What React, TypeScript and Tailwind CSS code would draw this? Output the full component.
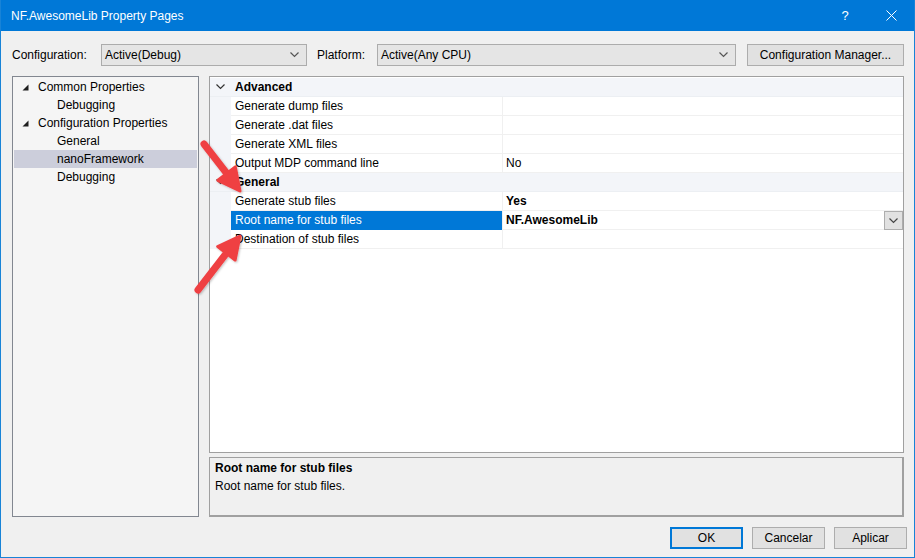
import React from 'react';

const font = { fontFamily: '"Liberation Sans", Arial, sans-serif' };

const Chevron = ({ className = '' }: { className?: string }) => (
  <svg width="9" height="6" viewBox="0 0 9 6" className={className}>
    <polyline points="0.5,0.5 4.5,4.5 8.5,0.5" fill="none" stroke="currentColor" strokeWidth="1.2" />
  </svg>
);

const TreeArrow = () => (
  <svg width="7" height="7" viewBox="0 0 7 7" className="shrink-0">
    <polygon points="6.5,0.5 6.5,6.5 0.5,6.5" fill="#1e1e1e" />
  </svg>
);

const treeItems = [
  { label: 'Common Properties', level: 0 },
  { label: 'Debugging', level: 1 },
  { label: 'Configuration Properties', level: 0 },
  { label: 'General', level: 1 },
  { label: 'nanoFramework', level: 1, selected: true },
  { label: 'Debugging', level: 1 },
];

type Row =
  | { kind: 'cat'; label: string }
  | { kind: 'prop'; label: string; value?: string; bold?: boolean; selected?: boolean; dropdown?: boolean };

const rows: Row[] = [
  { kind: 'cat', label: 'Advanced' },
  { kind: 'prop', label: 'Generate dump files' },
  { kind: 'prop', label: 'Generate .dat files' },
  { kind: 'prop', label: 'Generate XML files' },
  { kind: 'prop', label: 'Output MDP command line', value: 'No' },
  { kind: 'cat', label: 'General' },
  { kind: 'prop', label: 'Generate stub files', value: 'Yes', bold: true },
  { kind: 'prop', label: 'Root name for stub files', value: 'NF.AwesomeLib', bold: true, selected: true, dropdown: true },
  { kind: 'prop', label: 'Destination of stub files' },
];

const Combo = ({ text, width }: { text: string; width: string }) => (
  <div className={`${width} h-[22px] bg-[#e5e5e5] border border-[#acacac] flex items-center pl-[3px] pr-[7px]`}>
    <span className="flex-1">{text}</span>
    <Chevron className="text-[#555]" />
  </div>
);

const WinButton = ({ label, primary }: { label: string; primary?: boolean }) => (
  <div
    className={`w-[73px] h-[22px] bg-[#e1e1e1] flex items-center justify-center ${
      primary ? 'border-2 border-[#0078d7]' : 'border border-[#adadad]'
    }`}
  >
    {label}
  </div>
);

const Arrows = () => (
  <svg className="absolute left-0 top-0 pointer-events-none" width="915" height="558" viewBox="0 0 915 558">
    <defs>
      <filter id="sh" x="-20%" y="-20%" width="140%" height="140%">
        <feDropShadow dx="1" dy="1" stdDeviation="1" floodColor="#000" floodOpacity="0.25" />
      </filter>
    </defs>
    <g fill="#ef4043" stroke="#ef4043" strokeLinejoin="round" strokeLinecap="round" filter="url(#sh)">
      <line x1="203" y1="144" x2="227" y2="175" strokeWidth="7" />
      <polygon points="239,191 216.9,180.3 234.3,166.9" strokeWidth="3" />
      <line x1="197" y1="290" x2="224" y2="255" strokeWidth="7" />
      <polygon points="239,236 234.1,260.1 216.7,246.5" strokeWidth="3" />
    </g>
  </svg>
);

export default function App() {
  return (
    <div style={font} className="relative w-[915px] h-[558px] text-[12px] text-black bg-[#f0f0f0] border-x border-b border-[#1883d7] flex flex-col overflow-hidden">
      {/* title bar */}
      <div className="h-[31px] bg-[#0078d7] flex items-center text-white shrink-0">
        <span className="pl-[10px] flex-1">NF.AwesomeLib Property Pages</span>
        <div className="w-[46px] h-full flex items-center justify-center text-[13px]">?</div>
        <div className="w-[46px] h-full flex items-center justify-center">
          <svg width="11" height="11" viewBox="0 0 11 11">
            <path d="M0.5 0.5 L10.5 10.5 M10.5 0.5 L0.5 10.5" stroke="#fff" strokeWidth="1" />
          </svg>
        </div>
      </div>

      {/* toolbar */}
      <div className="flex items-center mt-[13px] pl-[11px] h-[22px] shrink-0">
        <span className="w-[89px]">Configuration:</span>
        <Combo text="Active(Debug)" width="w-[206px]" />
        <span className="ml-[10px] w-[60px]">Platform:</span>
        <Combo text="Active(Any CPU)" width="w-[359px]" />
        <div className="ml-[11px] w-[157px] h-[22px] bg-[#e1e1e1] border border-[#adadad] flex items-center justify-center">
          Configuration Manager...
        </div>
      </div>

      {/* main area */}
      <div className="flex mt-[10px] pl-[11px] pr-[10px] h-[441px] shrink-0 gap-[10px]">
        {/* tree */}
        <div className="w-[187px] h-full border border-[#828790] bg-[#f5f5f5] pt-[1px] px-[1px]">
          {treeItems.map((t, i) => (
            <div
              key={i}
              className={`h-[18px] flex items-center ${t.selected ? 'bg-[#cccedb]' : ''}`}
            >
              {t.level === 0 ? (
                <>
                  <span className="w-[7px] ml-[8px] flex items-center"><TreeArrow /></span>
                  <span className="ml-[9px]">{t.label}</span>
                </>
              ) : (
                <span className="ml-[43px]">{t.label}</span>
              )}
            </div>
          ))}
        </div>

        {/* right column */}
        <div className="flex-1 flex flex-col">
          <div className="h-[377px] border border-[#a0a0a0] bg-white pt-[1px]">
            {rows.map((r, i) =>
              r.kind === 'cat' ? (
                <div key={i} className="h-[19px] flex items-center bg-[#f3f5f9] border-b border-[#eceff3]">
                  <span className="w-[21px] flex justify-center text-[#333]">
                    <Chevron />
                  </span>
                  <span className="font-bold pl-[4px]">{r.label}</span>
                </div>
              ) : (
                <div key={i} className="h-[19px] flex">
                  <div className="w-[21px] bg-[#f3f5f9]" />
                  <div
                    className={`w-[271px] flex items-center pl-[4px] border-b ${
                      r.selected ? 'bg-[#0078d7] text-white border-[#0078d7]' : 'border-[#f0f0f0]'
                    }`}
                  >
                    {r.label}
                  </div>
                  <div className="flex-1 flex items-center border-l border-b border-[#f0f0f0] pl-[3px]">
                    <span className={`flex-1 ${r.bold ? 'font-bold' : ''}`}>{r.value ?? ''}</span>
                    {r.dropdown && (
                      <div className="w-[19px] h-[19px] bg-[#e1e1e1] border border-[#adadad] flex items-center justify-center text-[#444] self-start">
                        <Chevron />
                      </div>
                    )}
                  </div>
                </div>
              ),
            )}
          </div>
          <div className="mt-[4px] h-[60px] border border-[#a0a0a0] border-r-2 border-b-2 bg-[#f0f0f0] pl-[5px] pt-[1px] leading-[18px]">
            <div className="font-bold">Root name for stub files</div>
            <div>Root name for stub files.</div>
          </div>
        </div>
      </div>

      {/* buttons */}
      <div className="flex justify-end gap-[9px] mt-[10px] pr-[7px] shrink-0">
        <WinButton label="OK" primary />
        <WinButton label="Cancelar" />
        <WinButton label="Aplicar" />
      </div>

      <Arrows />
    </div>
  );
}
